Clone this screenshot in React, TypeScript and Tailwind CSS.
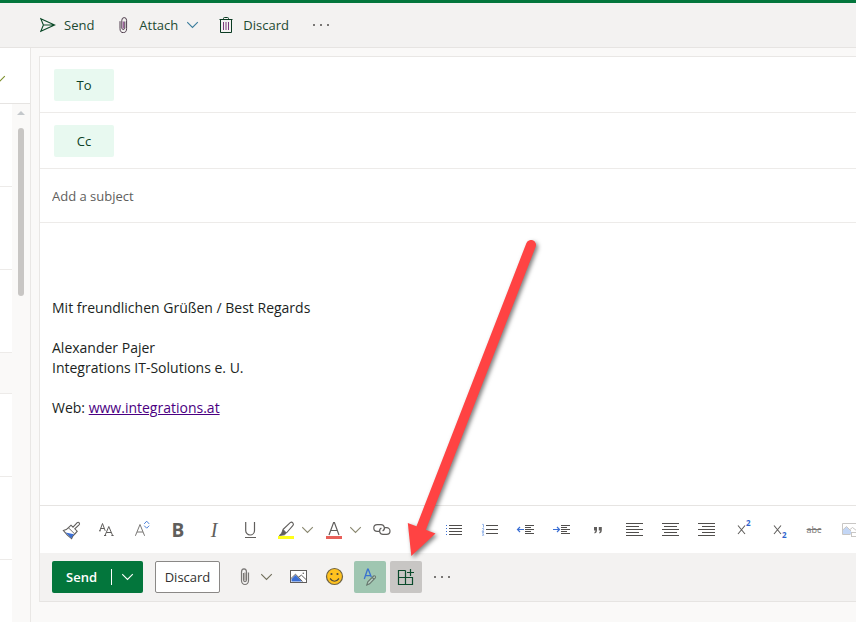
import type { ReactNode } from "react";

function IconButton({ label, children, className = "" }: { label: string; children: ReactNode; className?: string }) {
  return (
    <button
      type="button"
      aria-label={label}
      title={label}
      className={`flex h-8 w-8 shrink-0 items-center justify-center rounded-xs ${className}`}
    >
      {children}
    </button>
  );
}

function Glyph({ children, stroke = "#605e5c" }: { children: ReactNode; stroke?: string }) {
  return (
    <svg width="20" height="20" viewBox="0 0 20 20" fill="none" stroke={stroke} strokeWidth="1" className="shrink-0 overflow-visible" aria-hidden="true">
      {children}
    </svg>
  );
}

function Chevron({ color = "#605e5c" }: { color?: string }) {
  return (
    <svg width="12" height="8" viewBox="0 0 12 8" fill="none" stroke={color} strokeWidth="1.1" className="shrink-0" aria-hidden="true">
      <path d="M0.2 1.2 5.5 6.5 10.8 1.2" />
    </svg>
  );
}

function ChevronButton({ label, color }: { label: string; color?: string }) {
  return (
    <button type="button" aria-label={label} className="flex h-8 w-3 shrink-0 items-center justify-center">
      <Chevron color={color} />
    </button>
  );
}

function Dots({ color = "#797775" }: { color?: string }) {
  return (
    <svg width="16" height="4" viewBox="0 0 16 4" fill={color} aria-hidden="true">
      <rect x="0" y="1" width="2" height="2" />
      <rect x="7" y="1" width="2" height="2" />
      <rect x="14" y="1" width="2" height="2" />
    </svg>
  );
}

function Lines({ rows, color = "#504e4c" }: { rows: [number, number, number][]; color?: string }) {
  return (
    <>
      {rows.map(([x, y, w]) => (
        <rect key={`${x}-${y}`} x={x} y={y} width={w} height="1" fill={color} stroke="none" />
      ))}
    </>
  );
}

function CommandBar() {
  return (
    <header className="shrink-0 border-t-3 border-b border-t-[#03763c] border-b-[#e6e4e2] bg-[#f3f2f1]">
      <div className="flex h-11 items-center pl-10 text-[13px] text-[#1c4a31]">
        <button type="button" className="flex items-center gap-2">
          <svg width="16" height="16" viewBox="0 0 16 16" fill="none" stroke="#0b4a28" strokeWidth="1.1" aria-hidden="true">
            <path d="M0.8 1.8 14.6 8 0.8 14.2 3.4 8Z M3.4 8H14.6" />
          </svg>
          <span className="pt-0.5">Send</span>
        </button>
        <button type="button" className="ml-[25px] flex items-center gap-[11px]">
          <svg width="9" height="16" viewBox="0 0 9 16" fill="none" stroke="#4c3a4a" strokeWidth="1" aria-hidden="true">
            <path d="M1 4.2V11.5A3.2 4 0 0 0 7.6 11.5V3.4A2.4 2.8 0 0 0 2.8 3.4V11.2A1.6 2 0 0 0 5.8 11.2V4.5" />
            <path d="M4.3 4.5V11.5" stroke="#8b3d8b" />
          </svg>
          <span className="pt-0.5">Attach</span>
        </button>
        <button type="button" aria-label="Attach options" className="ml-[9px]">
          <Chevron color="#3b7d9c" />
        </button>
        <button type="button" className="ml-5 flex items-center gap-2.5">
          <svg width="14" height="17" viewBox="0 0 14 17" fill="none" stroke="#0b3b22" strokeWidth="1" aria-hidden="true">
            <path d="M0.5 2.5H13.5 M4.5 2.5V1.5Q4.5 0.5 5.5 0.5H8.5Q9.5 0.5 9.5 1.5V2.5 M1.5 2.5V15.5H12.5V2.5" />
            <path d="M4.5 5V13 M7 5V13 M9.5 5V13" stroke="#7b3a7b" />
          </svg>
          <span className="pt-0.5">Discard</span>
        </button>
        <button type="button" aria-label="More commands" className="ml-6">
          <Dots />
        </button>
      </div>
    </header>
  );
}

function MessageList() {
  return (
    <aside className="flex w-[31px] shrink-0 flex-col overflow-hidden border-r border-[#e9e7e5]">
      <div className="h-14 shrink-0 overflow-hidden border-b border-[#e6e4e2] bg-white pt-[27px]">
        <button type="button" aria-label="Filter" className="-ml-1.5 flex">
          <Chevron color="#7d8f2c" />
        </button>
      </div>
      <div className="flex min-h-0 flex-1">
        <ul className="w-3 shrink-0 overflow-hidden">
          <li className="h-[83px] border-b border-[#edebe9] bg-white" />
          <li className="h-[83px] border-b border-[#edebe9] bg-white" />
          <li className="h-[83px] border-b border-[#edebe9] bg-white" />
          <li className="h-10" />
          <li className="h-[84px] border-y border-[#edebe9] bg-white" />
          <li className="h-[83px] border-b border-[#edebe9] bg-white" />
          <li className="h-[83px] border-b border-[#edebe9] bg-white" />
        </ul>
        <div className="flex flex-1 flex-col items-center pt-[7px]">
          <svg width="8" height="4" viewBox="0 0 8 4" aria-hidden="true">
            <path d="M0 4 4 0 8 4Z" fill="#c4c8cb" />
          </svg>
          <div className="mt-[13px] h-[168px] w-1.5 rounded-full bg-[#c8c6c4]" />
        </div>
      </div>
    </aside>
  );
}

function RecipientRow({ label }: { label: string }) {
  return (
    <div className="flex h-14 shrink-0 items-start border-b border-[#edebe9] pt-3 pl-3.5">
      <button type="button" className="h-8 w-15 shrink-0 rounded-xs bg-[#e8f9f0] pt-0.5 text-[13px] font-medium text-[#0b4226]">
        {label}
      </button>
      <input aria-label={label} className="h-8 min-w-0 flex-1 px-2 text-[13px] outline-none" />
    </div>
  );
}

function FormatToolbar() {
  return (
    <div className="flex h-12 shrink-0 gap-1 overflow-hidden border-t border-[#e6e4e2] pt-2 pl-3.5 text-[#605e5c]">
      <IconButton label="Format painter">
        <Glyph>
          <path d="M3.4 10.6 6.2 9.6 8.6 7.6 15 13.8 12.6 16.4 11.6 18.6 7.4 15.2Z" fill="#fff" strokeWidth="1.1" />
          <path d="M5.6 12.4 14 14.2 12.2 16.4 11.4 18.2Z" fill="#3b6fd4" stroke="none" />
          <path d="M8.6 7.6 11 5.2 13 7.2 17 2.8Q18.4 1.8 19.2 2.8 20 3.8 19 4.8L14.8 8.8 17.2 11.2 15 13.8" fill="#fff" strokeWidth="1.1" />
        </Glyph>
      </IconButton>
      <IconButton label="Font">
        <Glyph>
          <path d="M3.8 10.8 6.5 3.5 9.2 10.8 M4.8 8.5H8.2 M9 15.5 12.8 6.5 16.6 15.5 M10.4 12.5H15.2 M3 10.8H4.8 M8 15.5H10.2 M15.4 15.5H17.6" />
        </Glyph>
      </IconButton>
      <IconButton label="Font size">
        <Glyph stroke="#797775">
          <path d="M3.4 15.8 8 4.5 12.6 15.8 M5 12H11" />
          <path d="M12.2 3.9 14.7 1.2 17.2 3.9 M12.2 5.7 14.7 8.2 17.2 5.7" stroke="#4a7fd8" />
        </Glyph>
      </IconButton>
      <IconButton label="Bold" className="text-[19px] leading-5 font-bold">B</IconButton>
      <IconButton label="Italic">
        <span className="font-['Liberation_Serif',serif] text-[20px] leading-5 italic">I</span>
      </IconButton>
      <IconButton label="Underline">
        <Glyph>
          <path d="M5.7 2V10.4A4.4 4.6 0 0 0 14.5 10.4V2" strokeWidth="1.2" />
          <path d="M5 17.5H16" />
        </Glyph>
      </IconButton>
      <div className="flex shrink-0">
        <IconButton label="Highlight">
          <Glyph>
            <path d="M7 9.5 14.2 2.6Q15.6 1.6 16.8 2.8 18 4.2 17 5.4L10.4 13" strokeWidth="1.1" />
            <path d="M7 9.5 10.4 13 8.4 14.8 3.4 15.4 5.8 13Z" fill="#605e5c" />
            <rect x="2" y="16" width="16" height="3" fill="#ffff19" stroke="none" />
          </Glyph>
        </IconButton>
        <ChevronButton label="Highlight color" color="#8a8870" />
      </div>
      <div className="flex shrink-0">
        <IconButton label="Font color">
          <Glyph>
            <path d="M5 15 9.6 2.5H10.4L15 15 M6.6 10.5H13.4" strokeWidth="1.2" />
            <rect x="2" y="16" width="16" height="3" fill="#e8605a" stroke="none" />
          </Glyph>
        </IconButton>
        <ChevronButton label="Font color options" color="#8a8870" />
      </div>
      <IconButton label="Insert link">
        <Glyph>
          <path d="M7.2 11.4H5.2A3.4 3.4 0 0 1 5.2 4.6H9A3.4 3.4 0 0 1 10.6 11" strokeWidth="1.2" />
          <path d="M12.8 7.6H14.6A3.4 3.4 0 0 1 14.6 14.4H11A3.4 3.4 0 0 1 9.4 8" strokeWidth="1.2" />
        </Glyph>
      </IconButton>
      <div className="w-8 shrink-0" />
      <IconButton label="Bulleted list">
        <Glyph>
          <Lines rows={[[5, 5, 13], [5, 8, 13], [5, 11, 13], [5, 14, 13]]} />
          <Lines color="#3b6fd4" rows={[[2, 5, 1], [2, 8, 1], [2, 11, 1], [2, 14, 1]]} />
        </Glyph>
      </IconButton>
      <IconButton label="Numbered list">
        <Glyph>
          <Lines rows={[[6, 5, 12], [6, 9, 12], [6, 13, 12]]} />
          <path d="M2.2 4.4H3.5V7.5 M2.2 8.5H3.6V9.8L2.2 11.4H4 M2.2 12.5H3.6L2.8 13.8 3.8 15.2H2" stroke="#8fb0e8" />
        </Glyph>
      </IconButton>
      <IconButton label="Decrease indent">
        <Glyph>
          <Lines rows={[[9, 5, 9], [9, 7, 6], [9, 9, 9], [9, 11, 6], [9, 13, 9]]} />
          <path d="M8 9.5H1.5 M4 7 1.5 9.5 4 12" stroke="#3b6fd4" strokeWidth="1.2" />
        </Glyph>
      </IconButton>
      <IconButton label="Increase indent">
        <Glyph>
          <Lines rows={[[9, 5, 9], [9, 7, 6], [9, 9, 9], [9, 11, 6], [9, 13, 9]]} />
          <path d="M1 9.5H7.5 M5 7 7.5 9.5 5 12" stroke="#3b6fd4" strokeWidth="1.2" />
        </Glyph>
      </IconButton>
      <IconButton label="Quote">
        <Glyph>
          <path d="M6 7H9V10Q9 13 6.5 13.5V12Q7.5 11.5 7.5 10.5H6Z M10.8 7H13.8V10Q13.8 13 11.3 13.5V12Q12.3 11.5 12.3 10.5H10.8Z" fill="#605e5c" stroke="none" />
        </Glyph>
      </IconButton>
      <IconButton label="Align left">
        <Glyph>
          <Lines rows={[[2, 3, 17], [2, 6, 13], [2, 9, 17], [2, 12, 13], [2, 15, 17]]} />
        </Glyph>
      </IconButton>
      <IconButton label="Align center">
        <Glyph>
          <Lines rows={[[2, 3, 17], [4, 6, 13], [2, 9, 17], [4, 12, 13], [2, 15, 17]]} />
        </Glyph>
      </IconButton>
      <IconButton label="Align right">
        <Glyph>
          <Lines rows={[[2, 3, 17], [6, 6, 13], [2, 9, 17], [6, 12, 13], [2, 15, 17]]} />
        </Glyph>
      </IconButton>
      <IconButton label="Superscript">
        <Glyph>
          <path d="M6 5.5 13 14 M13 5.5 6 14" strokeWidth="1.1" />
          <text x="14" y="6" fontSize="8" fontWeight="700" fill="#2f62cc" stroke="none">2</text>
        </Glyph>
      </IconButton>
      <IconButton label="Subscript">
        <Glyph>
          <path d="M6 5.5 13 14 M13 5.5 6 14" strokeWidth="1.1" />
          <text x="14" y="18" fontSize="8" fontWeight="700" fill="#2f62cc" stroke="none">2</text>
        </Glyph>
      </IconButton>
      <IconButton label="Strikethrough" className="text-[9px] leading-4 text-[#797775] line-through">abc</IconButton>
      <IconButton label="Insert inline picture">
        <Glyph stroke="#c8c6c4">
          <path d="M10.5 14.5H2.5V3.5H17.5V11" />
          <path d="M3 13.5V10L6.5 6.8 11.5 12V14H3Z" fill="#c3d6f5" stroke="none" />
          <path d="M3 9.8 6.5 6.5 11 11 M10 9.5 12.5 7.5 17 11" />
          <rect x="11.5" y="12.5" width="8" height="4" fill="#fff" />
        </Glyph>
      </IconButton>
    </div>
  );
}

function PointerArrow() {
  return (
    <svg
      width="150"
      height="330"
      viewBox="400 235 150 330"
      className="pointer-events-none absolute bottom-7 left-2.5 z-10 max-w-none drop-shadow-[2px_2px_2px_rgba(0,0,0,0.5)]"
      aria-hidden="true"
    >
      <path d="M531 245 420 531" stroke="#ff4343" strokeWidth="10" strokeLinecap="round" />
      <path d="M411.3 556 407.8 523 435.5 533.5Z" fill="#ff4343" />
    </svg>
  );
}

function ActionBar() {
  return (
    <footer className="flex h-[49px] shrink-0 items-start border-b border-[#e6e4e2] bg-[#f3f2f1] pt-2 pl-3 text-[13px]">
      <div className="flex h-8 shrink-0 items-center rounded-xs bg-[#03763c] text-white">
        <button type="button" className="h-8 w-[59px] pt-0.5 font-semibold">Send</button>
        <span className="h-4 w-px bg-white" />
        <button type="button" aria-label="Send options" className="flex h-8 w-[31px] items-center justify-center">
          <Chevron color="#ffffff" />
        </button>
      </div>
      <button type="button" className="ml-3 h-8 w-[65px] shrink-0 rounded-xs border border-[#8a8886] bg-white pt-0.5 font-medium text-[#323130]">
        Discard
      </button>
      <div className="ml-[9px] flex gap-1">
        <div className="mr-[5px] flex">
          <IconButton label="Attach">
            <Glyph stroke="#797775">
              <path d="M6.5 5V13.5A3.5 4 0 0 0 13.5 13.5V5.5 M6.5 5A2.5 3.2 0 0 1 11.5 5V12.8A1.5 1.8 0 0 1 8.5 12.8V6" strokeWidth="1.2" />
              <path d="M10 5.5V13.5" stroke="#b3b0ad" strokeWidth="2" />
            </Glyph>
          </IconButton>
          <ChevronButton label="Attach options" color="#716f5c" />
        </div>
        <IconButton label="Insert picture">
          <Glyph>
            <rect x="2.5" y="3.5" width="16" height="12" fill="#fff" />
            <path d="M3.5 14.5V12L7.5 8 14 14.5Z" fill="#3b6fd4" stroke="none" />
            <path d="M3 11.5 7.5 7.2 14.5 14.5 M10.5 10 13.5 8.2 18 12.5" />
            <circle cx="15.3" cy="6.3" r="0.8" fill="#605e5c" stroke="none" />
          </Glyph>
        </IconButton>
        <IconButton label="Insert emoji">
          <Glyph>
            <circle cx="10.5" cy="9.5" r="8" fill="#ffc21f" stroke="#6e6447" strokeWidth="1.2" />
            <circle cx="7.5" cy="7" r="1.1" fill="#504a3c" stroke="none" />
            <circle cx="13.5" cy="7" r="1.1" fill="#504a3c" stroke="none" />
            <path d="M6 11.5Q10.5 17 15 11.5" stroke="#504a3c" strokeWidth="1.2" />
          </Glyph>
        </IconButton>
        <IconButton label="Formatting options" className="bg-[#9fc6b1]">
          <Glyph>
            <path d="M4.3 12 7.6 2.2H8.2L11.3 10 M5.2 8.6H10.2" stroke="#3b73cf" strokeWidth="1.3" />
            <path d="M6.8 18 7.8 14.8 13.6 9Q14.5 8.4 15.2 9.2 15.9 10 15.3 10.8L9.6 16.8Z M12.2 10.4 13.8 12" fill="#b9cfc2" stroke="#67776e" strokeWidth="1.1" />
          </Glyph>
        </IconButton>
        <div className="relative">
          <IconButton label="Add-ins" className="bg-[#c8c6c4]">
            <Glyph stroke="#0a4a2b">
              <path d="M9.5 3.5H2.5V17.5H16.5V10.5H2.5 M9.5 3.5V17.5 M14.5 2V9 M11 5.5H18" strokeWidth="1.2" />
            </Glyph>
          </IconButton>
          <PointerArrow />
        </div>
        <IconButton label="More options">
          <Dots />
        </IconButton>
      </div>
    </footer>
  );
}

export default function App() {
  return (
    <div className="flex h-screen flex-col overflow-hidden bg-[#faf9f8] font-['Open_Sans','Noto_Sans',sans-serif]">
      <CommandBar />
      <div className="flex min-h-0 flex-1">
        <MessageList />
        <main className="mt-2 mb-5 ml-2 flex min-w-0 flex-1 flex-col border-t border-l border-[#e9e7e5] bg-white">
          <RecipientRow label="To" />
          <RecipientRow label="Cc" />
          <div className="flex h-[54px] shrink-0 border-b border-[#edebe9] px-3">
            <input
              aria-label="Subject"
              placeholder="Add a subject"
              className="w-full pt-0.5 text-[13px] outline-none placeholder:text-[#605e5c]"
            />
          </div>
          <article className="min-h-0 flex-1 px-3 pt-[75px] text-[14px] leading-5 text-[#201f1e]">
            <p>Mit freundlichen Grüßen / Best Regards</p>
            <p className="mt-5">
              Alexander Pajer
              <br />
              Integrations IT-Solutions e. U.
            </p>
            <p className="mt-5">
              Web:{" "}
              <a href="http://www.integrations.at" className="text-[#4b0082] underline">
                www.integrations.at
              </a>
            </p>
          </article>
          <FormatToolbar />
          <ActionBar />
        </main>
      </div>
    </div>
  );
}
